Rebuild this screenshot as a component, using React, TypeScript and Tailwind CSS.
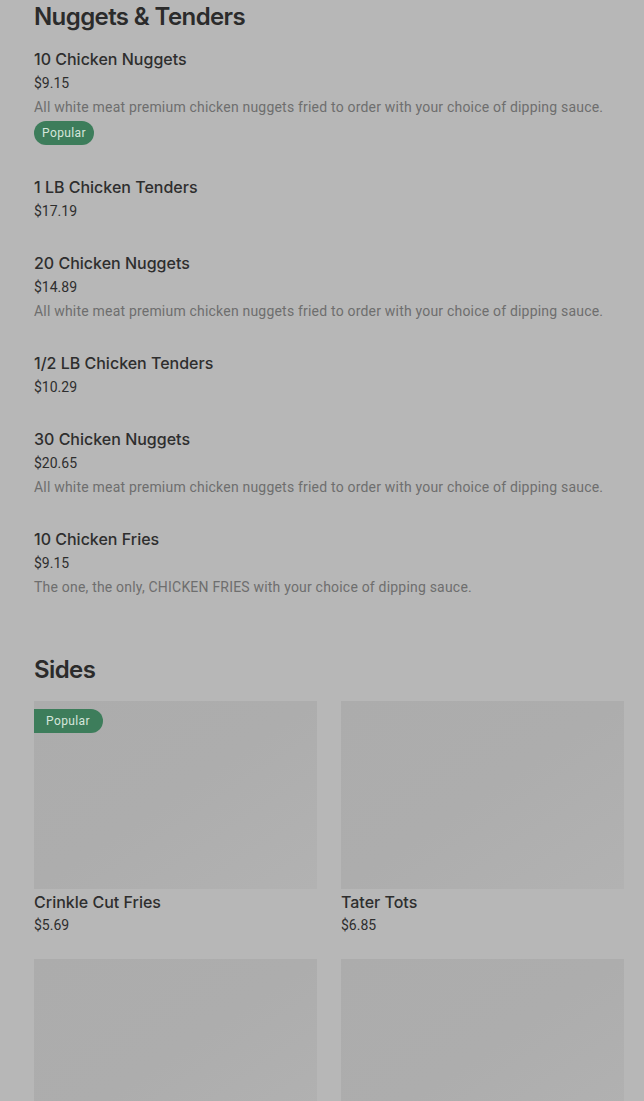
import React from 'react';

interface MenuItem {
  name: string;
  price: string;
  description?: string;
  popular?: boolean;
}

interface SideItem {
  name?: string;
  price?: string;
  popular?: boolean;
}

const nuggets: MenuItem[] = [
  { name: '10 Chicken Nuggets', price: '$9.15', description: 'All white meat premium chicken nuggets fried to order with your choice of dipping sauce.', popular: true },
  { name: '1 LB Chicken Tenders', price: '$17.19' },
  { name: '20 Chicken Nuggets', price: '$14.89', description: 'All white meat premium chicken nuggets fried to order with your choice of dipping sauce.' },
  { name: '1/2 LB Chicken Tenders', price: '$10.29' },
  { name: '30 Chicken Nuggets', price: '$20.65', description: 'All white meat premium chicken nuggets fried to order with your choice of dipping sauce.' },
  { name: '10 Chicken Fries', price: '$9.15', description: 'The one, the only, CHICKEN FRIES with your choice of dipping sauce.' },
];

// last two cards are cut by the viewport, only their images show
const sides: SideItem[] = [
  { name: 'Crinkle Cut Fries', price: '$5.69', popular: true },
  { name: 'Tater Tots', price: '$6.85' },
  {},
  {},
];

const ListItem: React.FC<{ item: MenuItem }> = ({ item }) => (
  <div className="pb-7">
    <div className="font-['Inter',sans-serif] text-[16px] leading-6 font-medium text-[#2e2e2e]">{item.name}</div>
    <div className="text-[14px] leading-6 text-[#2e2e2e]">{item.price}</div>
    {item.description && (
      <div className="text-[14px] leading-6 tracking-[0.2px] text-[#6e6e6e] whitespace-nowrap">{item.description}</div>
    )}
    {item.popular && (
      <div className="mt-0.5 mb-0.5 flex">
        <span className="flex h-6 items-center rounded-full bg-[#3d7d5b] px-2 text-[12px] tracking-[0.4px] text-[#d6e6dc]">
          Popular
        </span>
      </div>
    )}
  </div>
);

const SideCard: React.FC<{ item: SideItem }> = ({ item }) => (
  <div className="flex flex-col pb-[23px]">
    <div className="relative h-[188px] w-full bg-gradient-to-br from-[#acacac] via-[#adadad] to-[#b2b2b2]">
      {item.popular && (
        <div className="absolute left-0 top-2 flex h-6 items-center rounded-r-full bg-[#3d7d5b] pl-3 pr-[13px] text-[12px] tracking-[0.4px] text-[#d6e6dc]">
          Popular
        </div>
      )}
    </div>
    <div className="mt-px h-[46px]">
      {item.name && (
        <div className="font-['Inter',sans-serif] text-[16px] leading-6 font-medium text-[#2e2e2e]">{item.name}</div>
      )}
      {item.price && <div className="text-[14px] leading-[22px] text-[#2e2e2e]">{item.price}</div>}
    </div>
  </div>
);

export default function App() {
  return (
    <div className="h-[1101px] overflow-hidden bg-[#b7b7b7] pl-[34px] pr-5 font-['Roboto',sans-serif]">
      <h2 className="pt-[1px] mb-[14px] font-['Inter',sans-serif] text-[24px] leading-8 font-semibold tracking-[-0.6px] text-[#2b2b2b]">
        Nuggets &amp; Tenders
      </h2>
      {nuggets.map((item) => (
        <ListItem key={item.name} item={item} />
      ))}
      <h2 className="mt-[29px] mb-[17px] font-['Inter',sans-serif] text-[24px] leading-7 font-semibold tracking-[-0.6px] text-[#2b2b2b]">
        Sides
      </h2>
      <div className="grid grid-cols-2 gap-x-6">
        {sides.map((item, i) => (
          <SideCard key={i} item={item} />
        ))}
      </div>
    </div>
  );
}
